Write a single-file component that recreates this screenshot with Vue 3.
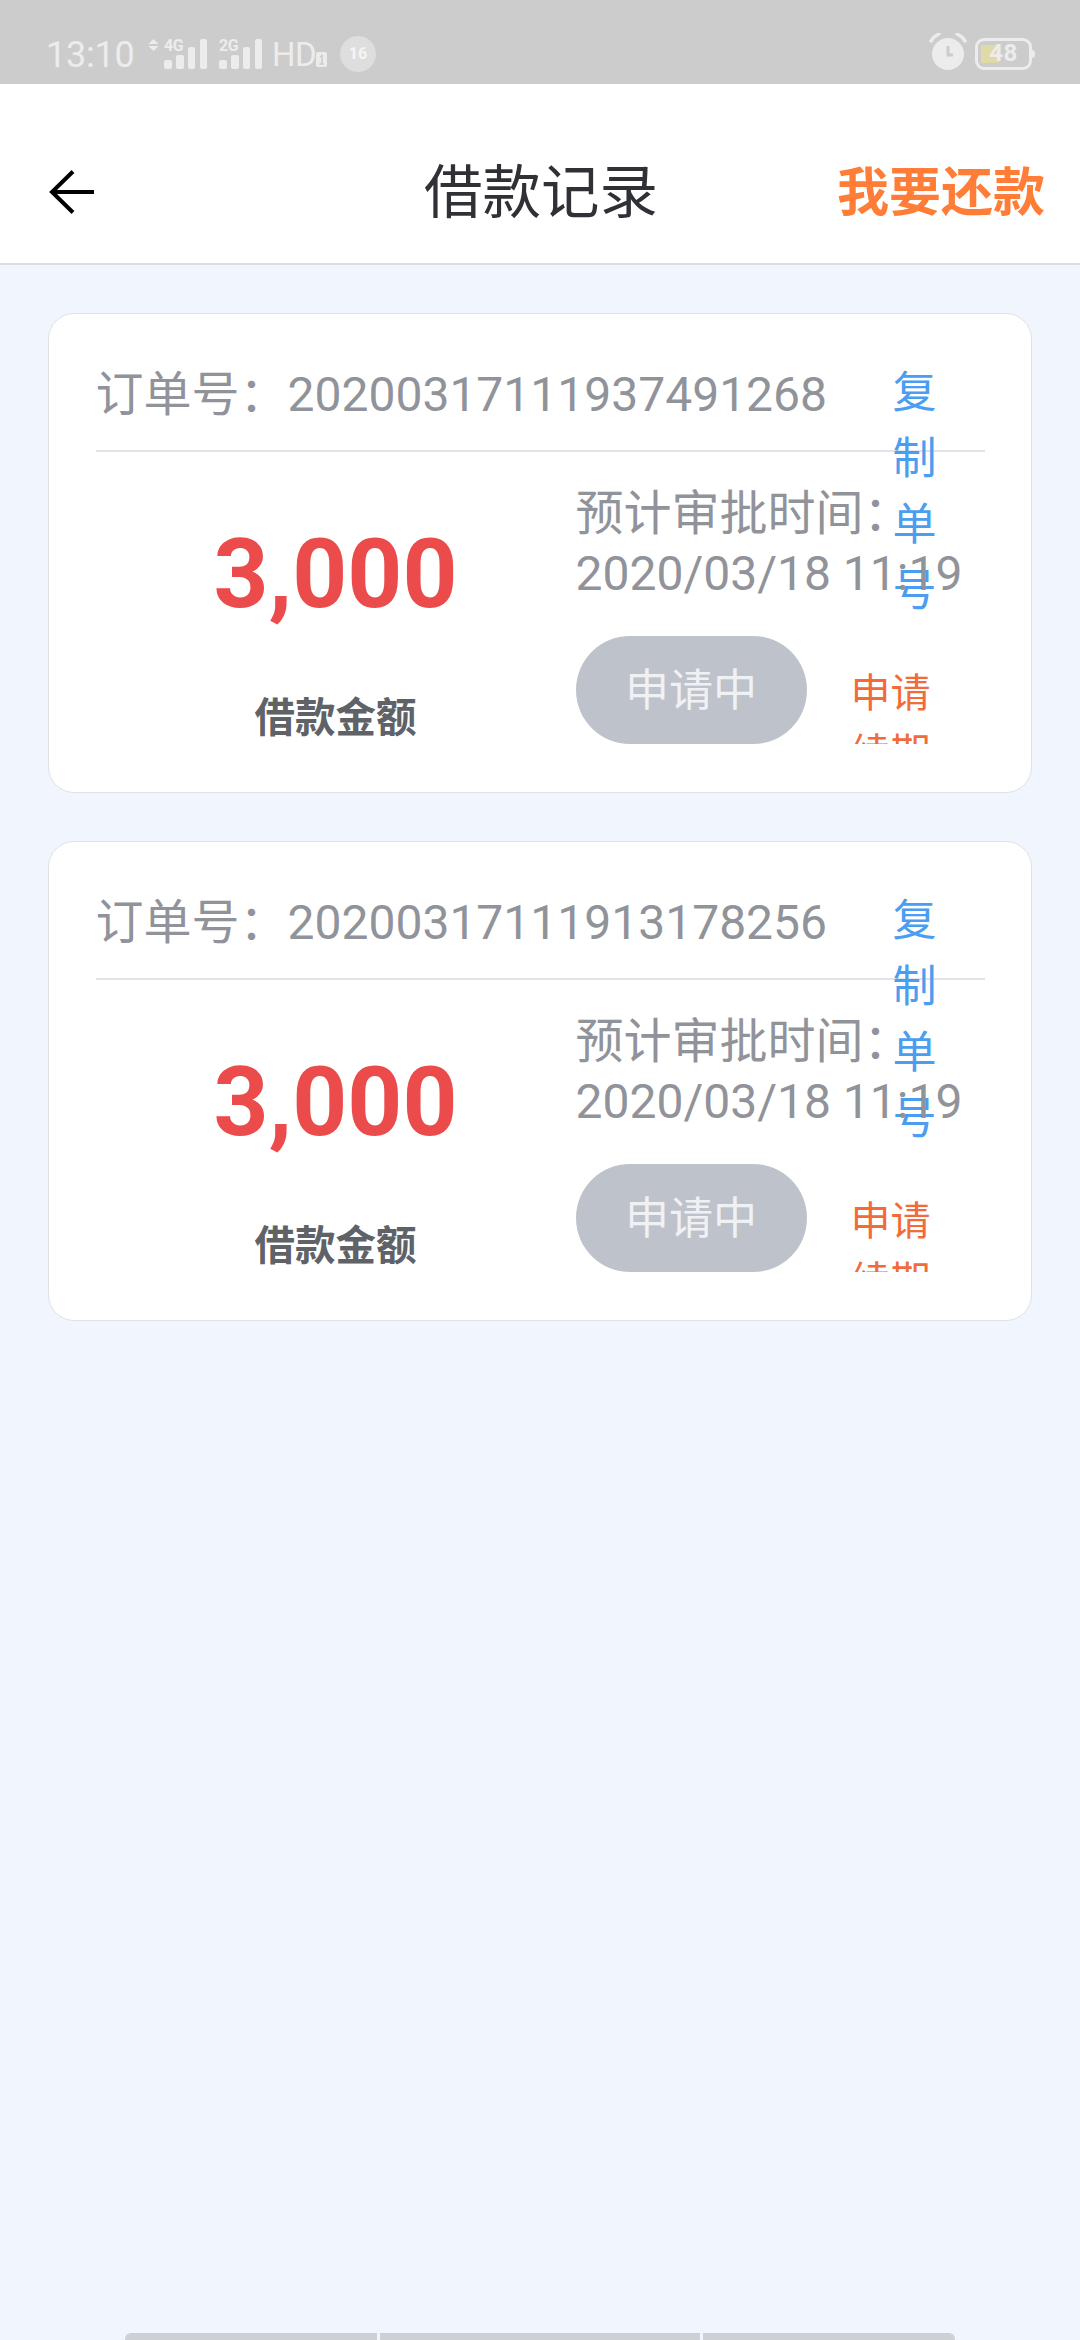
<script setup>
const orders = [
  { id: '20200317111937491268', amount: '3,000', time: '2020/03/18 11:19' },
  { id: '20200317111913178256', amount: '3,000', time: '2020/03/18 11:19' },
]
const signals = [
  { label: '4G', x: 164 },
  { label: '2G', x: 219 },
]
</script>

<template>
  <div class="page">
    <div class="status">
      <span class="clock">13:10</span>
      <svg class="signal" width="130" height="36" viewBox="144 36 130 36">
        <path d="M153.500 39 L158.500 44 L148.500 44 Z M153.500 51 L158.500 46 L148.500 46 Z" fill="#ececec" />
        <g v-for="s in signals" :key="s.label" fill="#ececec">
          <text :x="s.x" y="51" class="net">{{ s.label }}</text>
          <rect :x="s.x" y="60" width="8" height="9" rx="2" />
          <rect :x="s.x + 12" y="55" width="8" height="14" rx="2" />
          <rect :x="s.x + 24" y="47" width="7" height="22" rx="2" />
          <rect :x="s.x + 36" y="39" width="7" height="30" rx="2" />
        </g>
      </svg>
      <span class="hd">HD</span>
      <svg class="sim" width="11" height="15" viewBox="0 0 11 15">
        <path d="M2 0 H9 Q11 0 11 2 V13 Q11 15 9 15 H2 Q0 15 0 13 V2 Q0 0 2 0 Z" fill="#ececec" />
        <path d="M4 5 L6 3.500 V12 M3.500 12 H8" fill="none" stroke="#cccccc" stroke-width="1.500" />
      </svg>
      <span class="badge">16</span>
      <span class="status-gap"></span>
      <svg class="alarm" width="38" height="38" viewBox="0 0 38 38">
        <circle cx="19" cy="21" r="16" fill="#ececec" />
        <path d="M19 13 V22 H24" fill="none" stroke="#cccccc" stroke-width="3" />
        <path d="M2 8 Q5 3 10 1 M28 1 Q33 3 36 8" fill="none" stroke="#ececec" stroke-width="3.500" stroke-linecap="round" />
      </svg>
      <div class="battery">
        <span class="battery-fill"></span>
        <span class="battery-num">48</span>
      </div>
      <span class="battery-tip"></span>
    </div>

    <header class="nav">
      <svg class="back" width="46" height="44" viewBox="0 0 46 44">
        <path d="M45 22 H3 M24 1.500 L3 22 L24 42.500" fill="none" stroke="#000" stroke-width="4" />
      </svg>
      <h1 class="title">借款记录</h1>
      <span class="repay">我要还款</span>
    </header>

    <main class="list">
      <section v-for="o in orders" :key="o.id" class="card">
        <div class="order">
          <p class="order-text">订单号：<span>{{ o.id }}</span></p>
          <div class="copy">复制单号</div>
        </div>
        <div class="body">
          <div class="left">
            <div class="amount">{{ o.amount }}</div>
            <div class="label">借款金额</div>
          </div>
          <div class="right">
            <div class="info">预计审批时间：<br />{{ o.time }}</div>
            <div class="actions">
              <div class="state">申请中</div>
              <div class="apply">申请续期</div>
            </div>
          </div>
        </div>
      </section>
    </main>

    <div class="home">
      <span class="home-a"></span>
      <span class="home-b"></span>
      <span class="home-c"></span>
    </div>
  </div>
</template>

<style>
html, body { margin: 0; padding: 0; }
</style>

<style scoped>
.page {
  width: 1080px;
  height: 2340px;
  display: flex;
  flex-direction: column;
  background: #f1f5fd;
  font-family: Roboto, "Noto Sans CJK SC", sans-serif;
  overflow: hidden;
}
.status {
  height: 84px;
  flex: none;
  background: #cccccc;
  color: #ececec;
  display: flex;
  align-items: flex-start;
  padding-left: 46px;
  box-sizing: border-box;
}
.clock { font-size: 36px; line-height: 42px; margin-top: 34px; width: 98px; flex: none; letter-spacing: -0.2px; }
.signal { flex: none; margin-top: 36px; margin-left: 0; }
.net { font: 700 16px Roboto, sans-serif; letter-spacing: -0.5px; }
.hd { font-size: 33px; line-height: 40px; margin-top: 35px; width: 44px; margin-left: -2px; letter-spacing: -0.5px; flex: none; }
.sim { flex: none; margin-top: 52px; }
.badge {
  width: 36px; height: 36px; border-radius: 50%;
  background: #dedede; color: #f5f5f5;
  font-size: 16px; font-weight: 700; line-height: 36px; text-align: center;
  margin-top: 36px; margin-left: 13px; flex: none;
}
.status-gap { flex: 1; }
.alarm { flex: none; margin-top: 33px; margin-right: 8px; }
.battery {
  width: 57px; height: 32px; box-sizing: border-box; flex: none;
  border: 3.500px solid #ececec; border-radius: 9px; margin-top: 38px;
  position: relative; font-size: 24px; font-weight: 700; line-height: 25px; text-align: center;
}
.battery-fill { position: absolute; left: 3px; top: 4px; width: 18px; height: 18px; background: #e0d9a8; }
.battery-num { position: relative; letter-spacing: 0.5px; }
.battery-tip { width: 3px; height: 8px; background: #ececec; border-radius: 0 3px 3px 0; margin-top: 50px; margin-right: 45px; flex: none; }

.nav {
  height: 181px;
  flex: none;
  box-sizing: border-box;
  background: #fff;
  border-bottom: 2px solid #dcdde0;
  display: flex;
  align-items: flex-start;
  padding-left: 49px;
}
.back { flex: none; margin-top: 86px; }
.title {
  margin: 77px 0 0 329px;
  width: 232px;
  font-size: 58.500px;
  line-height: 64px;
  font-weight: 400;
  color: #303136;
  white-space: nowrap;
  flex: none;
}
.repay {
  margin: 80px 0 0 181px;
  font-size: 52px;
  line-height: 60px;
  font-weight: 700;
  color: #ff7d37;
  white-space: nowrap;
  flex: none;
}

.list {
  flex: 1;
  display: flex;
  flex-direction: column;
  gap: 48px;
  padding: 48px 48px 0;
}
.card {
  height: 480px;
  box-sizing: border-box;
  background: #fff;
  border: 1.500px solid #e0e1e5;
  border-radius: 26px;
  padding: 0 46.500px;
  flex: none;
}
.order {
  height: 136px;
  display: flex;
  align-items: flex-start;
  border-bottom: 2px solid #e2e3e6;
}
.order-text {
  margin: 48px 0 0;
  width: 797px;
  flex: none;
  font-size: 48px;
  line-height: 66px;
  color: #909399;
  white-space: nowrap;
}
.copy {
  margin-top: 46px;
  width: 44px;
  height: 66px;
  flex: none;
  font-size: 44px;
  line-height: 66px;
  color: #4a9df0;
}
.body { display: flex; align-items: flex-start; }
.left { width: 480px; flex: none; text-align: center; }
.amount {
  margin-top: 66px;
  font-size: 96px;
  line-height: 112px;
  font-weight: 700;
  color: #ec4b4b;
}
.label {
  margin-top: 60px;
  font-size: 40.500px;
  line-height: 56px;
  font-weight: 700;
  color: #5f6266;
}
.right { flex: none; width: 410px; }
.info {
  margin-top: 32px;
  font-size: 48px;
  line-height: 60px;
  color: #909399;
  white-space: nowrap;
}
.actions { margin-top: 32px; display: flex; align-items: flex-start; }
.state {
  width: 231px;
  height: 108px;
  box-sizing: border-box;
  padding-top: 2px;
  border-radius: 54px;
  background: #bdc2cb;
  color: #f0f1f3;
  font-size: 44px;
  line-height: 106px;
  text-align: center;
  flex: none;
}
.apply {
  width: 80px;
  height: 108px;
  box-sizing: border-box;
  margin-left: 44px;
  padding-top: 28px;
  overflow: hidden;
  font-size: 40px;
  line-height: 60px;
  color: #f26b3a;
  flex: none;
}
.home {
  height: 7px;
  flex: none;
  display: flex;
  gap: 3px;
  padding: 0 125px;
}
.home-a, .home-b, .home-c { background: #cdd0d4; height: 7px; display: block; }
.home-a { width: 252px; border-top-left-radius: 6px; }
.home-b { width: 320px; }
.home-c { flex: 1; border-top-right-radius: 6px; }
</style>
